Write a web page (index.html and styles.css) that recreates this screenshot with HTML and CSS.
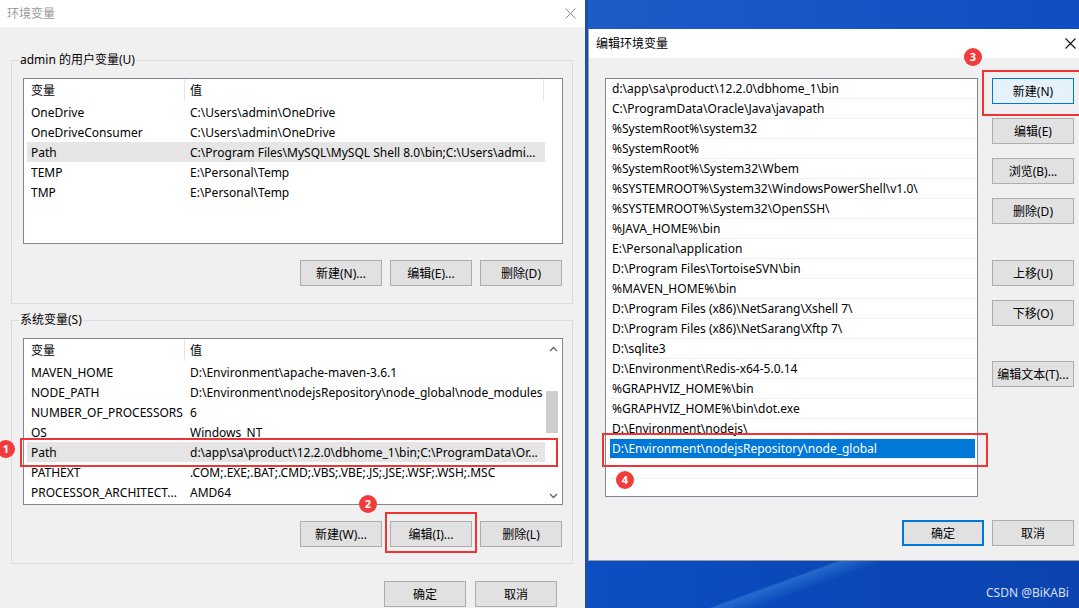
FILE: index.html
```html
<!DOCTYPE html>
<html lang="zh-CN">
<head>
<meta charset="utf-8">
<title>环境变量</title>
<link rel="stylesheet" href="styles.css">
</head>
<body>
<div class="screen">
  <div class="dlg dlg-left">
    <div class="titlebar">
      <span class="title inactive">环境变量</span>
      <svg class="close" width="11" height="11" viewBox="0 0 11 11"><path d="M0.5 0.5L10.5 10.5M10.5 0.5L0.5 10.5" stroke="#8a8a8a" stroke-width="1"/></svg>
    </div>
    <div class="body">
      <div class="group">
        <div class="legend">admin 的用户变量(U)</div>
        <div class="table t-user">
          <div class="tmain">
            <div class="thead">
              <div class="th c1">变量</div>
              <div class="th c2">值</div>
              <div class="th c3"></div>
            </div>
            <div class="trow"><span>OneDrive</span><span>C:\Users\admin\OneDrive</span></div>
            <div class="trow"><span>OneDriveConsumer</span><span>C:\Users\admin\OneDrive</span></div>
            <div class="trow sel"><span>Path</span><span>C:\Program Files\MySQL\MySQL Shell 8.0\bin;C:\Users\admi...</span></div>
            <div class="trow"><span>TEMP</span><span>E:\Personal\Temp</span></div>
            <div class="trow"><span>TMP</span><span>E:\Personal\Temp</span></div>
          </div>
        </div>
        <div class="btnrow">
          <button class="btn">新建(N)...</button>
          <button class="btn">编辑(E)...</button>
          <button class="btn">删除(D)</button>
        </div>
      </div>
      <div class="group g2">
        <div class="legend">系统变量(S)</div>
        <div class="table t-sys">
          <div class="tmain">
            <div class="thead">
              <div class="th c1">变量</div>
              <div class="th c2">值</div>
            </div>
            <div class="trow"><span>MAVEN_HOME</span><span>D:\Environment\apache-maven-3.6.1</span></div>
            <div class="trow"><span>NODE_PATH</span><span>D:\Environment\nodejsRepository\node_global\node_modules</span></div>
            <div class="trow"><span>NUMBER_OF_PROCESSORS</span><span>6</span></div>
            <div class="trow"><span>OS</span><span>Windows_NT</span></div>
            <div class="trow sel"><span>Path</span><span>d:\app\sa\product\12.2.0\dbhome_1\bin;C:\ProgramData\Or...</span></div>
            <div class="trow"><span>PATHEXT</span><span>.COM;.EXE;.BAT;.CMD;.VBS;.VBE;.JS;.JSE;.WSF;.WSH;.MSC</span></div>
            <div class="trow"><span>PROCESSOR_ARCHITECT...</span><span>AMD64</span></div>
          </div>
          <div class="vscroll">
            <svg width="9" height="6" viewBox="0 0 9 6"><path d="M1 5L4.5 1.5L8 5" fill="none" stroke="#606060" stroke-width="1.3"/></svg>
            <div class="track"><div class="thumb"></div></div>
            <svg width="9" height="6" viewBox="0 0 9 6"><path d="M1 1L4.5 4.5L8 1" fill="none" stroke="#606060" stroke-width="1.3"/></svg>
          </div>
        </div>
        <div class="btnrow">
          <button class="btn">新建(W)...</button>
          <button class="btn">编辑(I)...</button>
          <button class="btn">删除(L)</button>
        </div>
      </div>
      <div class="okrow">
        <button class="btn">确定</button>
        <button class="btn">取消</button>
      </div>
    </div>
  </div>

  <div class="strip"></div>

  <div class="right-area">
    <div class="desk-top"></div>
    <div class="dlg dlg-right">
      <div class="titlebar tb-right">
        <span class="title">编辑环境变量</span>
        <svg class="close" width="11" height="11" viewBox="0 0 11 11"><path d="M0.5 0.5L10.5 10.5M10.5 0.5L0.5 10.5" stroke="#111" stroke-width="1.1"/></svg>
      </div>
      <div class="rbody">
        <div class="rmain">
          <div class="plist">
            <div class="pitem"><span>d:\app\sa\product\12.2.0\dbhome_1\bin</span></div>
            <div class="pitem"><span>C:\ProgramData\Oracle\Java\javapath</span></div>
            <div class="pitem"><span>%SystemRoot%\system32</span></div>
            <div class="pitem"><span>%SystemRoot%</span></div>
            <div class="pitem"><span>%SystemRoot%\System32\Wbem</span></div>
            <div class="pitem"><span>%SYSTEMROOT%\System32\WindowsPowerShell\v1.0\</span></div>
            <div class="pitem"><span>%SYSTEMROOT%\System32\OpenSSH\</span></div>
            <div class="pitem"><span>%JAVA_HOME%\bin</span></div>
            <div class="pitem"><span>E:\Personal\application</span></div>
            <div class="pitem"><span>D:\Program Files\TortoiseSVN\bin</span></div>
            <div class="pitem"><span>%MAVEN_HOME%\bin</span></div>
            <div class="pitem"><span>D:\Program Files (x86)\NetSarang\Xshell 7\</span></div>
            <div class="pitem"><span>D:\Program Files (x86)\NetSarang\Xftp 7\</span></div>
            <div class="pitem"><span>D:\sqlite3</span></div>
            <div class="pitem"><span>D:\Environment\Redis-x64-5.0.14</span></div>
            <div class="pitem"><span>%GRAPHVIZ_HOME%\bin</span></div>
            <div class="pitem"><span>%GRAPHVIZ_HOME%\bin\dot.exe</span></div>
            <div class="pitem"><span>D:\Environment\nodejs\</span></div>
            <div class="pitem psel"><span>D:\Environment\nodejsRepository\node_global</span></div>
            <div class="pitem"><span></span></div>
          </div>
          <div class="rbtns">
            <button class="btn btn-hot">新建(N)</button>
            <button class="btn">编辑(E)</button>
            <button class="btn">浏览(B)...</button>
            <button class="btn">删除(D)</button>
            <button class="btn mt-big">上移(U)</button>
            <button class="btn">下移(O)</button>
            <button class="btn mt-big2">编辑文本(T)...</button>
          </div>
        </div>
        <div class="rokrow">
          <button class="btn btn-default">确定</button>
          <button class="btn">取消</button>
        </div>
      </div>
    </div>
    <div class="desk-bottom"></div>
  </div>

  <div class="mark box1"></div>
  <div class="mark box2"></div>
  <div class="mark box3"></div>
  <div class="mark box4"></div>
  <div class="badge b1">1</div>
  <div class="badge b2">2</div>
  <div class="badge b3">3</div>
  <div class="badge b4">4</div>
  <div class="watermark">CSDN @BiKABi</div>
</div>
</body>
</html>
```

FILE: styles.css
```css
* { box-sizing: border-box; }
html, body { margin: 0; padding: 0; }
body {
  font-family: "Noto Sans", "Noto Sans CJK SC", sans-serif;
  font-size: 12px;
  line-height: 16px;
  color: #000;
  background: #0c4fc0;
}
.screen {
  position: relative;
  width: 1079px;
  height: 608px;
  overflow: hidden;
  display: flex;
  background: #0c4fc0;
}
.dlg-left {
  width: 585px;
  height: 608px;
  background: #f0f0f0;
  flex: none;
}
.titlebar {
  height: 27px;
  background: #fff;
  display: flex;
  align-items: center;
  justify-content: space-between;
  padding: 0 9px 0 7px;
}
.title { font-size: 12px; }
.title.inactive { color: #9a9a9a; }
.body {
  padding: 33px 0 0 11px;
}
.group {
  width: 562px;
  border: 1px solid #dcdcdc;
  padding: 0 10px 17px 11px;
}
.g2 { margin-top: 16px; padding-bottom: 16px; }
.legend {
  display: block;
  width: max-content;
  height: 16px;
  line-height: 16px;
  margin: -9px 0 0 -4px;
  padding: 0 1px;
  background: #f0f0f0;
}
.table {
  margin-top: 10px;
  width: 540px;
  border: 1px solid #82878f;
  background: #fff;
  display: flex;
}
.t-user { height: 166px; }
.t-sys { height: 167px; }
.tmain { flex: 1; min-width: 0; }
.thead {
  display: flex;
  height: 23px;
}
.th {
  line-height: 22px;
  padding: 1px 0 0 7px;
  border-right: 1px solid #e5e5e5;
  height: 22px;
}
.th.c1 { width: 161px; }
.th.c2 { width: 359px; padding-left: 5px; }
.th.c3 { flex: 1; border-right: none; }
.t-sys .th.c2 { border-right: none; }
.trow {
  display: grid;
  grid-template-columns: 159px 1fr;
  height: 20px;
  line-height: 20px;
  margin-left: 3px;
  width: 518px;
  padding-left: 4px;
  white-space: nowrap;
}
.trow span { overflow: hidden; padding-top: 1px; }
.trow.sel { background: #e5e5e5; }
.vscroll {
  width: 17px;
  display: flex;
  flex-direction: column;
  align-items: center;
  padding: 7px 0 5px;
}
.vscroll svg { flex: none; }
.vscroll .track {
  flex: 1;
  width: 100%;
  padding-top: 39px;
}
.vscroll .thumb {
  width: 12px;
  height: 42px;
  background: #cdcdcd;
  margin-left: 1px;
}
.btnrow {
  display: flex;
  justify-content: flex-end;
  gap: 8px;
  margin-top: 16px;
}
.btn {
  width: 82px;
  height: 26px;
  background: #e1e1e1;
  border: 1px solid #adadad;
  font-family: inherit;
  font-size: 12px;
  color: #000;
  padding: 0;
  margin: 0;
  display: block;
}
.okrow {
  display: flex;
  justify-content: flex-end;
  gap: 9px;
  margin-top: 17px;
  padding-right: 28px;
}
.strip {
  width: 3px;
  flex: none;
  background: #1b4fae;
}
.right-area {
  flex: 1;
  display: flex;
  flex-direction: column;
}
.desk-top {
  height: 29px;
  background: linear-gradient(90deg, #1d5cc6, #0f4ec2);
}
.dlg-right {
  height: 532px;
  background: #f0f0f0;
  border-left: 1px solid #a0a0a0;
  border-bottom: 1px solid #9c9c9c;
  display: flex;
  flex-direction: column;
}
.tb-right {
  height: 29px;
  padding: 0 3px 0 7px;
}
.rbody {
  flex: 1;
  padding: 20px 0 0 16px;
}
.rmain { display: flex; }
.plist {
  width: 373px;
  height: 419px;
  background: #fff;
  border: 1px solid #82878f;
}
.pitem {
  height: 20px;
  border-bottom: 1px solid #f0f0f0;
  padding: 0 2px 0 4px;
}
.pitem span {
  display: block;
  height: 19px;
  line-height: 20px;
  overflow: hidden;
  padding-left: 2px;
  white-space: nowrap;
}
.pitem.psel span { background: #0078d7; color: #fff; }
.rbtns {
  display: flex;
  flex-direction: column;
  gap: 14px;
  margin-left: 14px;
}
.btn-hot { background: #e5f1fb; border-color: #0078d7; }
.mt-big { margin-top: 22px; }
.mt-big2 { margin-top: 21px; }
.rokrow {
  display: flex;
  gap: 8px;
  margin-top: 23px;
  padding-left: 297px;
}
.btn-default { border: 1px solid #0078d7; box-shadow: inset 0 0 0 1px #0078d7; }
.desk-bottom {
  flex: 1;
  background:
    linear-gradient(160deg, transparent 0 40%, rgba(80,170,240,0.35) 41%, transparent 48%),
    linear-gradient(90deg, #0b4fc2, #0a46b6 60%, #0b44b0);
}
.mark {
  position: absolute;
  border: 2px solid #ee3434;
}
.box1 { left: 20px; top: 438px; width: 538px; height: 29px; }
.box2 { left: 385px; top: 512px; width: 92px; height: 41px; }
.box3 { left: 982px; top: 70px; width: 100px; height: 46px; }
.box4 { left: 602px; top: 433px; width: 386px; height: 34px; }
.badge {
  position: absolute;
  width: 18px;
  height: 18px;
  border-radius: 50%;
  background: #f23c3c;
  color: #fff;
  font-weight: bold;
  font-size: 11px;
  line-height: 18px;
  text-align: center;
}
.b1 { left: -3px; top: 440px; }
.b2 { left: 359px; top: 495px; }
.b3 { left: 964px; top: 48px; }
.b4 { left: 616px; top: 471px; }
.watermark {
  position: absolute;
  left: 986px;
  top: 585px;
  color: rgba(255,255,255,0.85);
  font-size: 12px;
}
```
